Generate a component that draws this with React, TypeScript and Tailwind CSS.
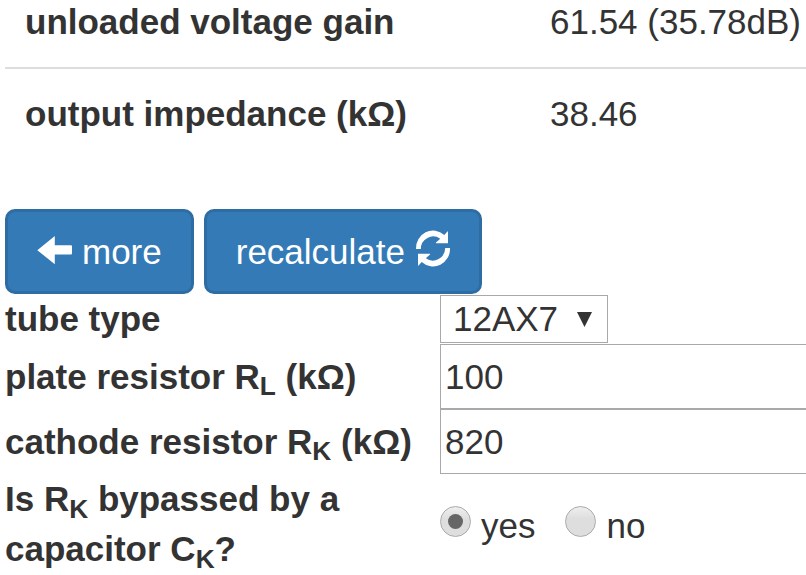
import { useState } from "react";
import type { ReactNode } from "react";

const results = [
  { name: "unloaded voltage gain", value: "61.54 (35.78dB)" },
  { name: "output impedance (kΩ)", value: "38.46" },
];

const buttonClass =
  "flex h-[85px] items-center gap-[10px] rounded-[10px] border-3 border-[#2e6da4] bg-[#337ab7] px-[29px] text-white";

const inputClass =
  "block h-[65px] w-full min-w-0 border border-r-0 border-[#a9a9a9] bg-white px-1 outline-none";

const radioClass =
  "mt-[5px] grid size-[31px] shrink-0 appearance-none place-content-center rounded-full border border-[#aaa] bg-linear-to-b from-[#efefef] via-[#dedede] via-40% to-[#dedede] before:size-[15px] before:rounded-full checked:before:bg-[#666]";

function ArrowLeftIcon() {
  return (
    <svg className="h-[35px] w-[35px] shrink-0" viewBox="0 0 35 35" fill="currentColor" aria-hidden="true">
      <path d="M0.3 16.2 L17.8 2 V11.2 H34 Q35 11.2 35 12.2 V19.6 Q35 20.6 34 20.6 H17.8 V30.2 Z" />
    </svg>
  );
}

function RefreshIcon() {
  const half =
    "M0 18 A17 17.5 0 0 1 28.3 4 L31.4 0.6 Q32 0 32 0.8 V12.3 H20.2 Q19.4 12.2 20 11.6 L24.2 7.8 A12.3 12.6 0 0 0 4.8 18 Z";
  return (
    <svg className="h-[35px] w-[35px] shrink-0" viewBox="-1 3 35 35" fill="currentColor" overflow="visible" aria-hidden="true">
      <path d={half} />
      <path d={half} transform="rotate(180 17 17.5)" />
    </svg>
  );
}

function Field({ id, label, children }: { id: string; label: ReactNode; children: ReactNode }) {
  return (
    <div className="grid grid-cols-[435px_minmax(0,1fr)] items-center">
      <label htmlFor={id} className="font-bold">
        {label}
      </label>
      {children}
    </div>
  );
}

export default function App() {
  const [plate, setPlate] = useState("100");
  const [cathode, setCathode] = useState("820");
  const [bypassed, setBypassed] = useState(true);

  return (
    <main className="overflow-hidden bg-white pl-[5px] font-['Liberation_Sans',Arial,sans-serif] text-[35px] leading-[50px] text-[#333]">
      <table className="w-full border-collapse text-left leading-[44px]">
        <tbody>
          {results.map((row) => (
            <tr key={row.name} className="border-t-2 border-[#ddd] first:border-t-0">
              <th scope="row" className={row === results[0] ? "w-[545px] pb-[23px] pl-5 font-bold" : "w-[545px] py-[23px] pl-5 font-bold"}>
                {row.name}
              </th>
              <td className={row === results[0] ? "pb-[23px] whitespace-nowrap" : "py-[23px] whitespace-nowrap"}>
                {row.value}
              </td>
            </tr>
          ))}
        </tbody>
      </table>

      <form className="pt-[50px]" onSubmit={(e) => e.preventDefault()}>
        <div className="flex gap-[10px]">
          <button type="button" className={buttonClass}>
            <ArrowLeftIcon />
            more
          </button>
          <button type="submit" className={buttonClass}>
            recalculate
            <RefreshIcon />
          </button>
        </div>

        <Field id="tube" label="tube type">
          <div className="relative my-px w-[168px]">
            <select id="tube" className="block h-12 w-full appearance-none border border-[#a9a9a9] bg-white pl-3 leading-[44px]">
              <option>12AX7</option>
            </select>
            <svg className="pointer-events-none absolute top-[17px] right-4 h-[15px] w-[15px]" viewBox="0 0 15 15" fill="currentColor" aria-hidden="true">
              <path d="M0 0 H15 L7.5 15 Z" />
            </svg>
          </div>
        </Field>
        <Field id="plate" label={<>plate resistor R<sub>L</sub> (kΩ)</>}>
          <input id="plate" className={inputClass} value={plate} onChange={(e) => setPlate(e.target.value)} />
        </Field>
        <Field id="cathode" label={<>cathode resistor R<sub>K</sub> (kΩ)</>}>
          <input id="cathode" className={inputClass} value={cathode} onChange={(e) => setCathode(e.target.value)} />
        </Field>
        <fieldset aria-labelledby="bypass" className="grid grid-cols-[435px_minmax(0,1fr)] items-center">
          <span id="bypass" className="pr-10 font-bold">
            Is R<sub>K</sub> bypassed by a capacitor C<sub>K</sub>?
          </span>
          <div className="flex gap-[30px] pt-1">
            <label className="flex gap-[10px]">
              <input type="radio" name="bypass" className={radioClass} checked={bypassed} onChange={() => setBypassed(true)} />
              yes
            </label>
            <label className="flex gap-[10px]">
              <input type="radio" name="bypass" className={radioClass} checked={!bypassed} onChange={() => setBypassed(false)} />
              no
            </label>
          </div>
        </fieldset>
      </form>
    </main>
  );
}
